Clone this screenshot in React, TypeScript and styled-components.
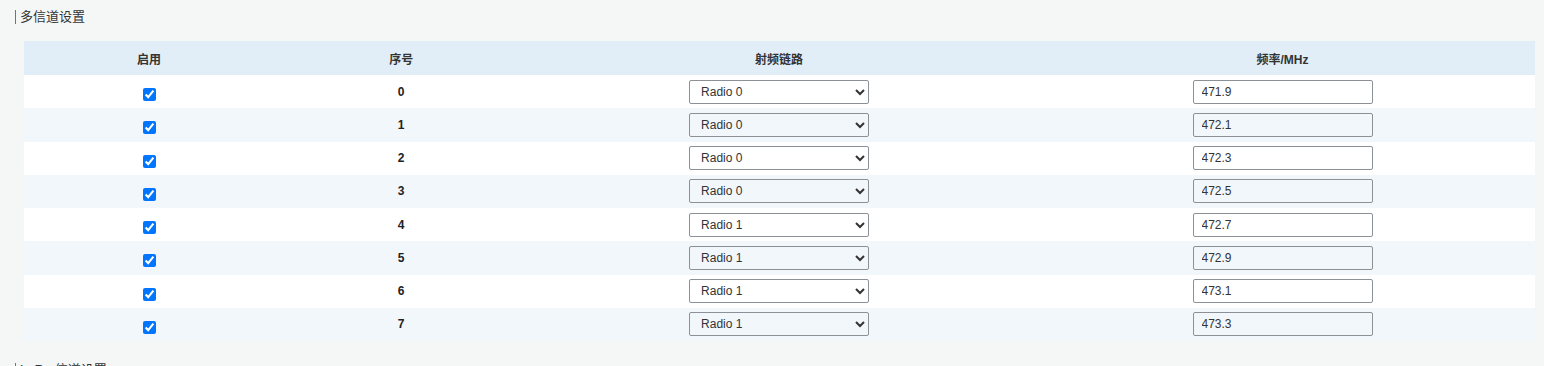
import React from 'react';
import styled, { createGlobalStyle } from 'styled-components';

const GlobalStyle = createGlobalStyle`
  html, body {
    margin: 0;
    padding: 0;
    background: #f5f7f7;
    font-family: "Liberation Sans", Arial, "Noto Sans CJK SC", sans-serif;
    color: #333;
  }
`;

const Page = styled.div`
  padding: 10px 9px 20px 15px;
`;

const SectionTitle = styled.div`
  display: flex;
  align-items: center;
  height: 14px;
  font-size: 13px;
  line-height: 14px;
  color: #333;
  border-left: 1.5px solid #3f7fbf;
  padding-left: 4px;
  margin-bottom: 17px;
`;

const Section = styled.div`
  margin-bottom: 22px;
`;

const Table = styled.table`
  margin-left: 9px;
  width: calc(100% - 9px);
  border-collapse: collapse;
  table-layout: fixed;
  font-size: 12px;
`;

const HeadCell = styled.th<{ w: string }>`
  width: ${(p) => p.w};
  height: 34px;
  padding: 0;
  background: #e1eef8;
  font-weight: bold;
  font-size: 12px;
  color: #333;
  text-align: center;
  vertical-align: middle;
`;

const Row = styled.tr<{ odd: boolean }>`
  height: 33.25px;
  background: ${(p) => (p.odd ? '#f2f7fb' : '#ffffff')};
`;

const Cell = styled.td<{ bold?: boolean }>`
  padding: 0;
  text-align: center;
  vertical-align: middle;
  font-weight: ${(p) => (p.bold ? 'bold' : 'normal')};
  color: #222;
`;

const Check = styled.input`
  width: 13px;
  height: 13px;
  margin: 9px 0 0;
  accent-color: #0075ff;
`;

const Select = styled.select`
  width: 180px;
  height: 24px;
  box-sizing: border-box;
  border: 1px solid #8b9197;
  border-radius: 2px;
  background: transparent;
  padding: 0 4px 0 7px;
  font-family: inherit;
  font-size: 12px;
  color: #333;
`;

const TextInput = styled.input`
  width: 180px;
  height: 24px;
  box-sizing: border-box;
  border: 1px solid #8b9197;
  border-radius: 2px;
  background: transparent;
  padding: 0 8px;
  font-family: inherit;
  font-size: 12px;
  color: #333;
`;

const channels = [
  { radio: 'Radio 0', freq: '471.9' },
  { radio: 'Radio 0', freq: '472.1' },
  { radio: 'Radio 0', freq: '472.3' },
  { radio: 'Radio 0', freq: '472.5' },
  { radio: 'Radio 1', freq: '472.7' },
  { radio: 'Radio 1', freq: '472.9' },
  { radio: 'Radio 1', freq: '473.1' },
  { radio: 'Radio 1', freq: '473.3' },
];

const App: React.FC = () => {
  return (
    <>
      <GlobalStyle />
      <Page>
        <Section>
          <SectionTitle>多信道设置</SectionTitle>
          <Table>
            <thead>
              <tr>
                <HeadCell w="16.55%">启用</HeadCell>
                <HeadCell w="16.82%">序号</HeadCell>
                <HeadCell w="33.21%">射频链路</HeadCell>
                <HeadCell w="33.42%">频率/MHz</HeadCell>
              </tr>
            </thead>
            <tbody>
              {channels.map((c, i) => (
                <Row key={i} odd={i % 2 === 1}>
                  <Cell>
                    <Check type="checkbox" defaultChecked />
                  </Cell>
                  <Cell bold>{i}</Cell>
                  <Cell>
                    <Select defaultValue={c.radio}>
                      <option>Radio 0</option>
                      <option>Radio 1</option>
                    </Select>
                  </Cell>
                  <Cell>
                    <TextInput type="text" defaultValue={c.freq} />
                  </Cell>
                </Row>
              ))}
            </tbody>
          </Table>
        </Section>
        <SectionTitle>LoRa 信道设置</SectionTitle>
      </Page>
    </>
  );
};

export default App;
